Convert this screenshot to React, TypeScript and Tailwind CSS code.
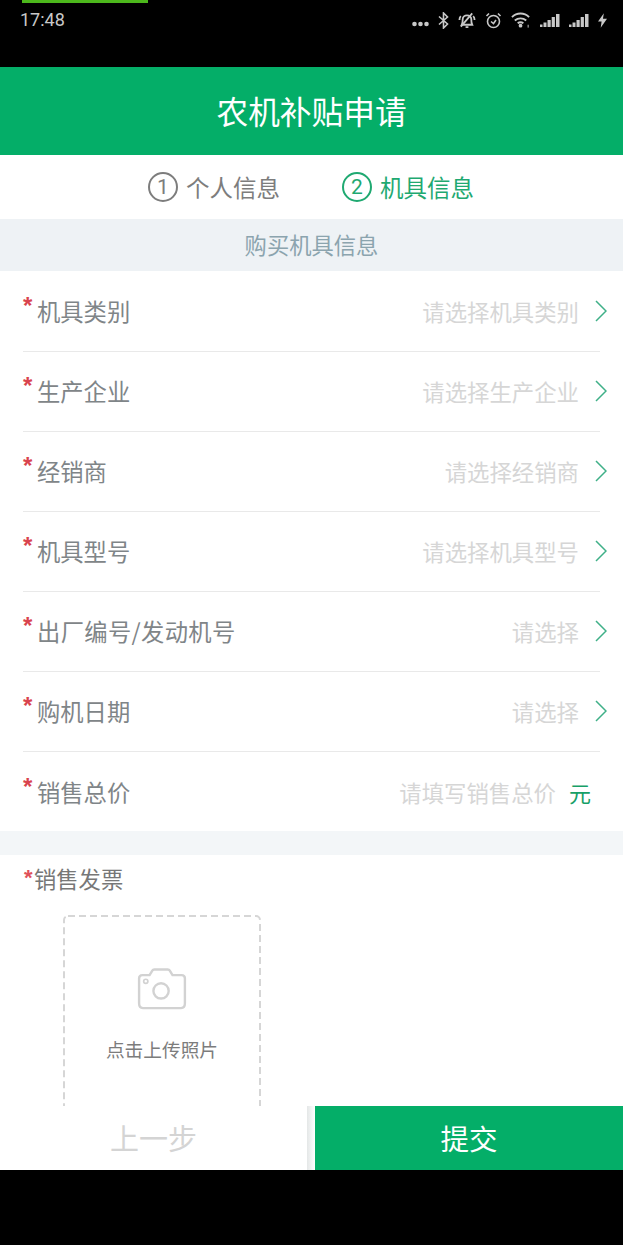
const rows = [
  { label: "机具类别", hint: "请选择机具类别" },
  { label: "生产企业", hint: "请选择生产企业" },
  { label: "经销商", hint: "请选择经销商" },
  { label: "机具型号", hint: "请选择机具型号" },
  { label: "出厂编号/发动机号", hint: "请选择", wide: true },
  { label: "购机日期", hint: "请选择" },
];

function Signal() {
  return (
    <svg width="20" height="13" viewBox="0 0 20 13" fill="currentColor">
      <rect x="0" y="10.500" width="2.500" height="2.500" />
      <rect x="3.500" y="8.500" width="3" height="4.500" />
      <rect x="7.500" y="6" width="3.200" height="7" />
      <rect x="11.700" y="3" width="3.200" height="10" />
      <rect x="16" y="0" width="3.500" height="13" />
    </svg>
  );
}

function StatusIcons() {
  return (
    <div className="flex items-center gap-[9px] text-[#c8c8c8]">
      <svg width="17" height="6" viewBox="0 0 17 6" fill="currentColor" className="mt-[8px]">
        <circle cx="2.500" cy="3" r="2.300" />
        <circle cx="8.500" cy="3" r="2.300" />
        <circle cx="14.500" cy="3" r="2.300" />
      </svg>
      <svg width="11" height="17" viewBox="0 0 11 17" fill="none" stroke="currentColor" strokeWidth="1.600">
        <path d="M1 4.500 9.500 12 5.500 16V1l4 4L1 12.500" />
      </svg>
      <svg width="18" height="17" viewBox="0 0 19 17" fill="none" stroke="currentColor" strokeWidth="1.900">
        <path d="M4 13c1-2 1-4 1-6 0-2 2-4 4.500-4s4.500 2 4.500 4c0 2 0 4 1 6H4Z" />
        <path d="M1.500 8c0-1.500.5-3 1.500-4M17.500 8c0-1.500-.5-3-1.500-4M8 15.500h3M15 1 3 15" />
      </svg>
      <svg width="17" height="17" viewBox="0 0 17 17" fill="none" stroke="currentColor" strokeWidth="1.600">
        <circle cx="8.500" cy="9.500" r="6" />
        <path d="M6 9.500 8.500 11.500 11 8M1.500 4 4 1.500M15.500 4 13 1.500" />
      </svg>
      <svg width="20" height="18" viewBox="0 0 21 18" fill="none" stroke="currentColor" strokeWidth="2">
        <path d="M1 6c5-5 13-5 18 0M4 9.500c3.500-3 8.500-3 12 0M7 12.500c2-1.500 4-1.500 6 0" />
        <circle cx="10" cy="15" r="1" fill="currentColor" />
        <path d="M18 14v3" strokeWidth="1" />
      </svg>
      <Signal />
      <Signal />
      <svg width="9" height="15" viewBox="0 0 10 16" fill="currentColor">
        <path d="M6.500 0 0 9h4l-1 7 7-10H5.500L6.500 0Z" />
      </svg>
    </div>
  );
}

function Step({ num, text, active }: { num: string; text: string; active?: boolean }) {
  return (
    <div className={`flex items-center gap-[8px] ${active ? "text-[#1fa971]" : "text-[#7d7d7d]"}`}>
      <div className="flex h-[30px] w-[30px] items-center justify-center rounded-full border-2 border-current text-[21px] leading-none font-['Roboto',sans-serif]">
        {num}
      </div>
      <span className="text-[23.500px] leading-[30px]">{text}</span>
    </div>
  );
}

function Star() {
  return <span className="mb-[9px] w-[14px] text-[24px] leading-none font-bold text-[#d9434e] font-['Liberation_Sans',sans-serif]">*</span>;
}

function Chevron() {
  return (
    <svg width="12" height="22" viewBox="0 0 12 22" fill="none" stroke="#3fb088" strokeWidth="1.500" className="-mr-[7px] ml-[16px]">
      <path d="M1 1 11 11 1 21" />
    </svg>
  );
}

export default function App() {
  return (
    <div className="flex h-[1245px] w-[623px] flex-col overflow-hidden bg-black font-['Noto_Sans_CJK_SC','Noto_Sans',sans-serif]">
      <div className="h-[67px] shrink-0">
        <div className="ml-[22px] h-[3px] w-[126px] bg-[#4cb81c]" />
        <div className="flex items-center justify-between pl-[20px] pr-[16px] pt-[7px]">
          <span className="text-[18px] leading-[20px] text-[#c8c8c8] font-['Roboto',sans-serif]">17:48</span>
          <StatusIcons />
        </div>
      </div>

      <div className="flex h-[88px] shrink-0 items-center justify-center bg-[#04ae68] text-[31.700px] text-white">
        农机补贴申请
      </div>

      <div className="flex h-[64px] shrink-0 items-center justify-center gap-[62px] bg-white pr-[1px]">
        <Step num="1" text="个人信息" />
        <Step num="2" text="机具信息" active />
      </div>

      <div className="flex h-[52px] shrink-0 items-center justify-center bg-[#eef2f5] text-[22.300px] text-[#8ba4ae]">
        购买机具信息
      </div>

      <div className="shrink-0 bg-white px-[23px] pt-[1px]">
        {rows.map((row) => (
          <div key={row.label} className="flex h-[80px] items-center border-b border-[#e9e9e9] pb-[2px]">
            <Star />
            <span className={`text-[23.300px] leading-[30px] text-[#7f8588] ${row.wide ? "tracking-[0.350px]" : ""}`}>{row.label}</span>
            <span className="ml-auto text-[22.400px] leading-[30px] text-[#d6d6d6]">{row.hint}</span>
            <Chevron />
          </div>
        ))}
        <div className="flex h-[79px] items-center">
          <Star />
          <span className="text-[23.300px] leading-[30px] text-[#7f8588]">销售总价</span>
          <span className="ml-auto text-[22.400px] leading-[30px] text-[#d6d6d6]">请填写销售总价</span>
          <span className="ml-[13px] mr-[9px] text-[22px] leading-[30px] text-[#17a067]">元</span>
        </div>
      </div>

      <div className="h-[24px] shrink-0 bg-[#f3f6f8]" />

      <div className="h-[251px] shrink-0 overflow-hidden bg-white pl-[24px]">
        <div className="flex h-[50px] items-center pb-[4px]">
          <span className="w-[10px] text-[22px] leading-none font-bold text-[#e0505a] font-['Liberation_Sans',sans-serif]">*</span>
          <span className="text-[22.300px] leading-[30px] text-[#777777]">销售发票</span>
        </div>
        <div className="relative ml-[39px] mt-[10px] flex h-[260px] w-[198px] flex-col items-center pt-[53px]">
          <svg width="198" height="260" viewBox="0 0 198 260" fill="none" stroke="#d6d6d6" strokeWidth="2" strokeDasharray="7 4" className="absolute left-0 top-0">
            <rect x="1" y="1" width="196" height="258" rx="4" />
          </svg>
          <svg width="50" height="42" viewBox="0 0 52 44" fill="none" stroke="#d2d2d2" strokeWidth="2.500">
            <path d="M2 12v-1c0-2 1.500-3.500 3.500-3.500H13l3-5c.5-1 1-1 2-1h14c1 0 1.500 0 2 1l3 5h9.500c2 0 3.500 1.500 3.500 3.500v26c0 3-1.500 5-4 5H6c-2.500 0-4-2-4-5V12Z" />
            <circle cx="25" cy="24" r="8" />
            <circle cx="9" cy="14" r="2.200" strokeWidth="1.800" />
          </svg>
          <span className="mt-[26px] text-[18.700px] leading-[26px] text-[#7c7c7c]">点击上传照片</span>
        </div>
      </div>

      <div className="flex h-[64px] shrink-0 bg-white">
        <div className="flex w-[307px] items-center justify-center text-[29px] text-[#d4d4d4]">上一步</div>
        <div className="w-[8px] bg-linear-to-r from-[#e4e7e7] to-white" />
        <div className="flex flex-1 items-center justify-center bg-[#04ae68] text-[28.500px] text-white">提交</div>
      </div>
    </div>
  );
}
